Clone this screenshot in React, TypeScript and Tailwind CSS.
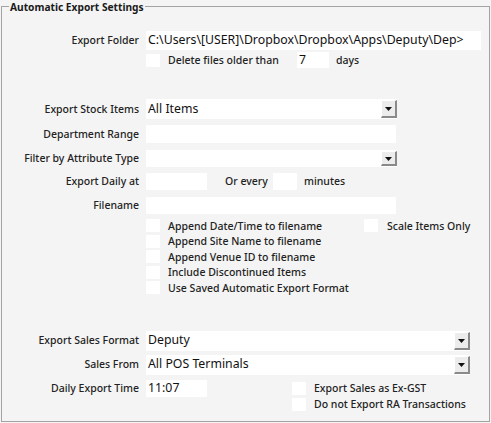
import React from "react";

const font = "font-['Noto_Sans','Open_Sans',sans-serif]";
const text = "whitespace-nowrap text-[10.5px] font-medium leading-none text-[#222]";

function Label({ children }: { children: React.ReactNode }) {
  return <div className={`w-[137px] shrink-0 text-right ${text}`}>{children}</div>;
}

function Box({ className = "" }: { className?: string }) {
  return <div className={`h-[13px] w-[14px] shrink-0 bg-white ${className}`} />;
}

function Field({ w, h, value = "" }: { w: string; h: string; value?: string }) {
  return (
    <div className={`${w} ${h} flex shrink-0 items-center overflow-hidden whitespace-nowrap bg-white pl-[2px] text-[12.3px] leading-none text-[#111]`}>
      {value}
    </div>
  );
}

function Select({ w, h, value = "" }: { w: string; h: string; value?: string }) {
  return (
    <div className={`${w} ${h} flex shrink-0 items-stretch bg-white`}>
      <div className="flex flex-1 items-center whitespace-nowrap pl-[2px] text-[12.3px] leading-none text-[#111]">{value}</div>
      <div className="my-[1px] flex w-[16px] items-center justify-center border-b-2 border-l border-r-2 border-t border-b-[#8a8a8a] border-l-white border-r-[#8a8a8a] border-t-white bg-[#ececec]">
        <svg width="7" height="4" viewBox="0 0 7 4" className="mt-[1px]">
          <path d="M0 0H7L3.5 4Z" fill="#111" />
        </svg>
      </div>
    </div>
  );
}

function Check({ label, className = "" }: { label: string; className?: string }) {
  return (
    <div className={`flex h-[15.5px] items-center gap-[8px] ${className}`}>
      <Box />
      <span className={text}>{label}</span>
    </div>
  );
}

export default function App() {
  return (
    <div className={`h-[423px] w-[491px] bg-[#f4f4f4] pl-[1px] pt-[6px] ${font}`}>
      <div className="relative h-[416px] w-[489px] border border-[#a3a3a3] pt-[24px]">
        {/* group title sits on the border line */}
        <span className="absolute -top-[6px] left-[7px] whitespace-nowrap bg-[#f4f4f4] px-[1px] text-[10.2px] font-bold leading-[12px] text-[#1a1a1a]">
          Automatic Export Settings
        </span>

        {/* ── EXPORT FOLDER ───────────────────────── */}
        <div className="flex items-center gap-[7px]">
          <Label>Export Folder</Label>
          <Field w="w-[335px]" h="h-[19px]" value="C:\Users\[USER]\Dropbox\Dropbox\Apps\Deputy\Dep>" />
        </div>
        <div className="mt-[2px] flex h-[16px] items-center pl-[144px]">
          <Box />
          <span className={`ml-[8px] w-[129px] ${text}`}>Delete files older than</span>
          <Field w="w-[32px]" h="h-[16px]" value="7" />
          <span className={`ml-[7px] ${text}`}>days</span>
        </div>

        {/* ── STOCK ITEMS ─────────────────────────── */}
        <div className="mt-[31px] flex items-center gap-[7px]">
          <Label>Export Stock Items</Label>
          <Select w="w-[251px]" h="h-[20px]" value="All Items" />
        </div>
        <div className="mt-[6px] flex items-center gap-[7px]">
          <Label>Department Range</Label>
          <Field w="w-[250px]" h="h-[18px]" />
        </div>
        <div className="mt-[7px] flex items-center gap-[7px]">
          <Label>Filter by Attribute Type</Label>
          <Select w="w-[251px]" h="h-[17px]" />
        </div>
        <div className="mt-[6px] flex items-center gap-[7px]">
          <Label>Export Daily at</Label>
          <Field w="w-[61px]" h="h-[17px]" />
          <span className={`ml-[11px] w-[41px] ${text}`}>Or every</span>
          <Field w="w-[24px]" h="h-[17px]" />
          <span className={text}>minutes</span>
        </div>
        <div className="mt-[7px] flex items-center gap-[7px]">
          <Label>Filename</Label>
          <Field w="w-[250px]" h="h-[17px]" />
        </div>

        <div className="mt-[4px] pl-[144px]">
          <div className="flex items-center">
            <Check label="Append Date/Time to filename" className="w-[218px]" />
            <Check label="Scale Items Only" className="gap-[9px]" />
          </div>
          <Check label="Append Site Name to filename" />
          <Check label="Append Venue ID to filename" />
          <Check label="Include Discontinued Items" />
          <Check label="Use Saved Automatic Export Format" />
        </div>

        {/* ── SALES ───────────────────────────────── */}
        <div className="mt-[35px] flex items-center gap-[7px]">
          <Label>Export Sales Format</Label>
          <Select w="w-[324px]" h="h-[20px]" value="Deputy" />
        </div>
        <div className="mt-[4px] flex items-center gap-[7px]">
          <Label>Sales From</Label>
          <Select w="w-[324px]" h="h-[20px]" value="All POS Terminals" />
        </div>
        <div className="mt-[5px] flex items-start gap-[7px]">
          <div className="flex h-[17px] items-center">
            <Label>Daily Export Time</Label>
          </div>
          <Field w="w-[61px]" h="h-[17px]" value="11:07" />
          <div className="ml-[78px] mt-[1px]">
            <Check label="Export Sales as Ex-GST" className="h-[16px]" />
            <Check label="Do not Export RA Transactions" className="h-[16px]" />
          </div>
        </div>
      </div>
    </div>
  );
}
